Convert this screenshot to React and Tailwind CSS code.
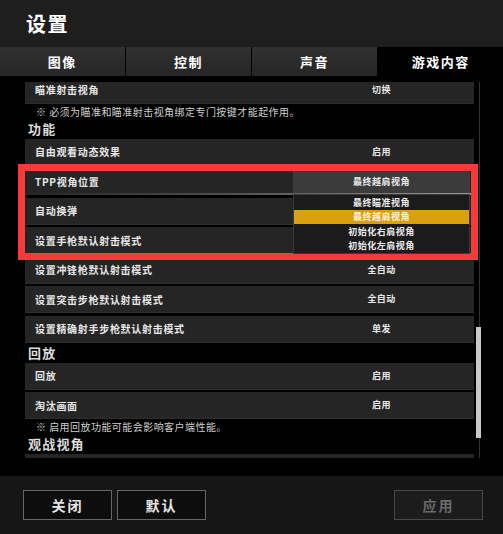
import React from 'react';

const font = { fontFamily: '"Noto Sans CJK SC", "Noto Sans", sans-serif' };

function Row({ label, value, last }) {
  return (
    <div className={`flex items-center h-[27px] bg-[#252525] border-b border-[#2e2e2e] ${last ? '' : 'mb-[2.5px]'}`}>
      <span className="flex-1 pl-[10px] text-[10px] font-bold tracking-[0.7px] text-[#e8e8e8]">{label}</span>
      <span className="w-[177px] mr-[4px] text-center text-[9px] font-bold tracking-[0.4px] text-[#e8e8e8]">{value}</span>
    </div>
  );
}

function Note({ children }) {
  return (
    <div className="h-[15px] flex items-center pl-[11px] text-[10px] tracking-[0.45px] text-[#cfcfcf]">{children}</div>
  );
}

function Heading({ children }) {
  return (
    <div className="h-[20px] flex items-center pl-[3px] text-[13px] font-bold tracking-[1.2px] text-[#dcdcdc]">{children}</div>
  );
}

export default function App() {
  const tabs = ['图像', '控制', '声音', '游戏内容'];
  const options = ['最终瞄准视角', '最终越肩视角', '初始化右肩视角', '初始化左肩视角'];

  return (
    <div className="w-[503px] h-[534px] bg-black flex flex-col overflow-hidden relative" style={font}>
      {/* header */}
      <div className="h-[47px] bg-[#1e1e1e] flex items-center pl-[26px] pt-[1px]">
        <span className="text-[20px] font-bold tracking-[1.5px] text-white">设置</span>
      </div>

      {/* tabs */}
      <div className="h-[29px] flex gap-[1.5px] bg-black">
        {tabs.map((t, i) => (
          <div
            key={t}
            className={`flex-1 flex items-center justify-center text-[13px] font-bold tracking-[1.5px] text-white ${
              i === 3 ? 'bg-black' : 'bg-gradient-to-b from-[#303030] to-[#262626]'
            }`}
          >
            {t}
          </div>
        ))}
      </div>

      {/* content */}
      <div className="flex mt-[6px] h-[376px]">
        <div className="ml-[25px] w-[449px] overflow-hidden">
          <div className="-mt-[5.5px]">
            <Row label="瞄准射击视角" value="切换" last />
            <Note>※ 必须为瞄准和瞄准射击视角绑定专门按键才能起作用。</Note>
            <Heading>功能</Heading>
            <Row label="自由观看动态效果" value="启用" />
            <div className="relative h-[27px] mb-[2.5px] bg-[#252525] flex items-center">
              <span className="flex-1 pl-[10px] text-[10px] font-bold tracking-[0.7px] text-[#e8e8e8]">TPP视角位置</span>
              <div className="absolute left-0 right-0 bottom-0 h-[2px] bg-gradient-to-r from-[#252525] via-[#555] to-[#9a9a9a]" />
            </div>
            <Row label="自动换弹" value="" />
            <Row label="设置手枪默认射击模式" value="" />
            <Row label="设置冲锋枪默认射击模式" value="全自动" />
            <Row label="设置突击步枪默认射击模式" value="全自动" />
            <Row label="设置精确射手步枪默认射击模式" value="单发" last />
            <Heading>回放</Heading>
            <Row label="回放" value="启用" />
            <Row label="淘汰画面" value="启用" last />
            <Note>※ 启用回放功能可能会影响客户端性能。</Note>
            <Heading>观战视角</Heading>
            <Row label="" value="" />
          </div>
        </div>
        {/* scrollbar */}
        <div className="relative ml-[2px] w-[5px]">
          <div className="absolute left-[3px] top-0 bottom-0 w-px bg-[#333]" />
          <div className="absolute left-0 top-[245px] h-[111px] w-[5px] bg-[#c8c8c8]" />
        </div>
      </div>

      <div className="flex-1" />

      {/* footer */}
      <div className="h-[58px] bg-[#161616] flex items-center px-[23px] gap-[5px]">
        <button className="w-[89px] h-[30px] bg-[#0d0d0d] border border-[#666] text-[14px] font-bold tracking-[2px] text-[#e6e6e6]">关闭</button>
        <button className="w-[89px] h-[30px] bg-[#0d0d0d] border border-[#666] text-[14px] font-bold tracking-[2px] text-[#e6e6e6]">默认</button>
        <div className="flex-1" />
        <button className="w-[89px] h-[30px] -mr-[3px] bg-[#1c1c1c] border border-[#474747] text-[14px] font-bold tracking-[2px] text-[#6a6a6a]">应用</button>
      </div>

      {/* red highlight frame */}
      <div className="absolute left-[18px] top-[164px] w-[460px] h-[96px] border-[7px] border-[#f63a3a] pointer-events-none" />

      {/* dropdown */}
      <div className="absolute left-[293px] top-[171px] w-[177px]">
        <div className="h-[22px] bg-[#3b3b3b] flex items-center justify-center text-[9px] font-bold tracking-[0.5px] text-[#ececec]">
          最终越肩视角
        </div>
        <div className="mt-px bg-[#1b1b1b] border border-[#3a3a3a]">
          {options.map((o, i) => (
            <div
              key={o}
              className={`h-[14.5px] flex items-center justify-center text-[9px] font-bold tracking-[0.5px] ${
                i === 1 ? 'bg-[#d9a10d] text-[#fff6dd]' : 'text-[#ececec]'
              }`}
            >
              {o}
            </div>
          ))}
        </div>
      </div>
    </div>
  );
}
